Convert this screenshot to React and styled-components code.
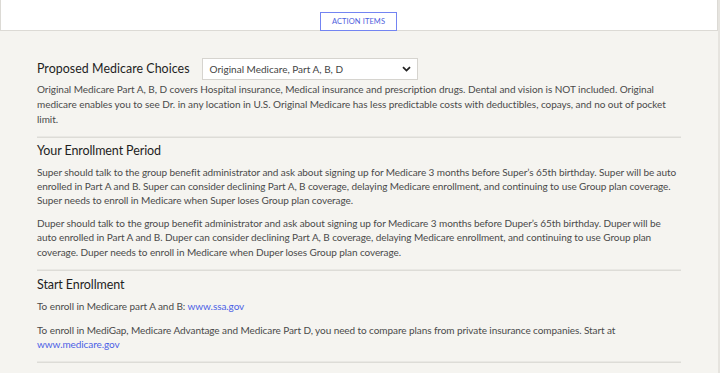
import React from "react";
import styled, { createGlobalStyle } from "styled-components";

const Global = createGlobalStyle`
  html, body { margin: 0; padding: 0; background: #f5f4f0; }
  body { font-family: Lato, "Noto Sans", sans-serif; color: #3a3a3a; }
  * { box-sizing: border-box; }
`;

const Page = styled.div`
  min-height: 373px;
  background: #f5f4f0;
  border-right: 2px solid #e6e4df;
`;

const TopBar = styled.div`
  height: 31px;
  background: #fff;
  border: 1px solid #dcdad5;
  border-top: none;
  display: flex;
  justify-content: center;
  align-items: flex-end;
`;

const TabButton = styled.button`
  height: 19px;
  margin-bottom: -1px;
  margin-left: -1px;
  padding: 0 11px;
  background: #fff;
  border: 1px solid #7384f2;
  color: #4d60dd;
  font-family: Lato, sans-serif;
  font-size: 7.5px;
  letter-spacing: 0.1px;
  line-height: 17px;
`;

const Content = styled.div`
  padding: 27px 37px 0 37px;
`;

const ChoiceRow = styled.div`
  display: flex;
  align-items: center;
  gap: 12px;
`;

const Heading = styled.h2`
  margin: 0;
  font-weight: 400;
  font-size: ${(p) => (p.$large ? "12.4px" : "12.5px")};
  line-height: 16px;
  color: #1e1e1e;
  letter-spacing: ${(p) => (p.$large ? "0.05px" : "-0.1px")};
`;

const SelectBox = styled.div`
  width: 216px;
  height: 22px;
  background: #fff;
  border: 1px solid #d6d4cf;
  display: flex;
  align-items: center;
  justify-content: space-between;
  padding: 0 6px 0 7px;
  font-size: 10px;
  color: #444;
`;

const Text = styled.p`
  margin: ${(p) => p.$mt || "0"} 0 0 0;
  font-size: 10px;
  line-height: ${(p) => (p.$tight ? "14.2px" : "15px")};
  color: #4a4a4a;
  letter-spacing: ${(p) => (p.$tight ? "-0.075px" : "-0.04px")};
`;

const Link = styled.a`
  color: #4b5fe6;
  text-decoration: none;
`;

const Rule = styled.hr`
  margin: ${(p) => p.$mt || "9px"} 0 0 0;
  height: 2px;
  border: none;
  border-top: 1px solid #e9e8e4;
  border-bottom: 1px solid #dddcd7;
`;

const Section = styled.section`
  padding-top: ${(p) => p.$pt || "5px"};
`;

const Chevron = () => (
  <svg width="9" height="6" viewBox="0 0 9 6">
    <path d="M1 1.2 L4.5 4.6 L8 1.2" fill="none" stroke="#222" strokeWidth="1.8" />
  </svg>
);

export default function App() {
  return (
    <Page>
      <Global />
      <TopBar>
        <TabButton>ACTION ITEMS</TabButton>
      </TopBar>
      <Content>
        <ChoiceRow>
          <Heading $large>Proposed Medicare Choices</Heading>
          <SelectBox>
            <span>Original Medicare, Part A, B, D</span>
            <Chevron />
          </SelectBox>
        </ChoiceRow>
        <Text $mt="1.5px">
          Original Medicare Part A, B, D covers Hospital insurance, Medical insurance and prescription drugs. Dental and vision is NOT included. Original medicare enables you to see Dr. in any location in U.S. Original Medicare has less predictable costs with deductibles, copays, and no out of pocket limit.
        </Text>
        <Rule $mt="9.5px" />
        <Section $pt="5px">
          <Heading>Your Enrollment Period</Heading>
          <Text $mt="6px" $tight>
            Super should talk to the group benefit administrator and ask about signing up for Medicare 3 months before Super’s 65th birthday. Super will be auto enrolled in Part A and B. Super can consider declining Part A, B coverage, delaying Medicare enrollment, and continuing to use Group plan coverage. Super needs to enroll in Medicare when Super loses Group plan coverage.
          </Text>
          <Text $mt="8.5px" $tight>
            Duper should talk to the group benefit administrator and ask about signing up for Medicare 3 months before Duper’s 65th birthday. Duper will be auto enrolled in Part A and B. Duper can consider declining Part A, B coverage, delaying Medicare enrollment, and continuing to use Group plan coverage. Duper needs to enroll in Medicare when Duper loses Group plan coverage.
          </Text>
        </Section>
        <Rule $mt="10px" />
        <Section $pt="6px">
          <Heading>Start Enrollment</Heading>
          <Text $mt="6.5px" $tight>
            To enroll in Medicare part A and B: <Link href="#">www.ssa.gov</Link>
          </Text>
          <Text $mt="9.5px" $tight>
            To enroll in MediGap, Medicare Advantage and Medicare Part D, you need to compare plans from private insurance companies. Start at <Link href="#">www.medicare.gov</Link>
          </Text>
        </Section>
        <Rule $mt="9.5px" />
      </Content>
    </Page>
  );
}
